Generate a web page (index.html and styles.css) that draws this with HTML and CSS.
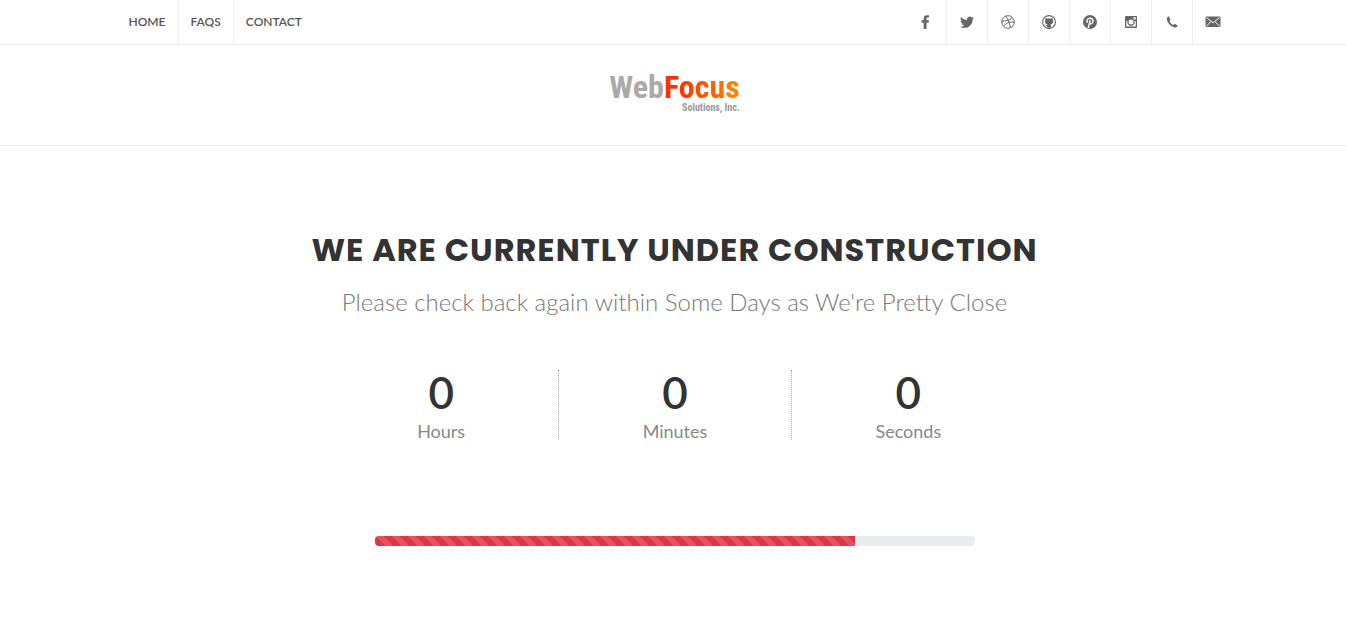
FILE: index.html
```html
<!DOCTYPE html>
<html lang="en">
<head>
<meta charset="utf-8">
<meta name="viewport" content="width=device-width, initial-scale=1">
<title>WebFocus Solutions, Inc. - Under Construction</title>
<link rel="stylesheet" href="styles.css">
</head>
<body>
<div class="top-bar">
  <div class="container top-bar-row">
    <nav class="top-links" aria-label="Main">
      <a href="#">Home</a>
      <a href="#">FAQs</a>
      <a href="#">Contact</a>
    </nav>
    <div class="top-social">
      <a href="#" aria-label="Facebook"><svg viewBox="0 0 14 14"><path d="M5.700 14V7.700H3.500V5.300h2.200V3.500C5.700 1.300 6.900.3 9 .3h2v2.300H9.700c-.9 0-1.200.4-1.200 1.200v1.500H11l-.4 2.400H8.500V14z"/></svg></a>
      <a href="#" aria-label="Twitter"><svg viewBox="0 0 14 14"><path d="M14 2.900c-.5.200-1 .4-1.600.4.600-.3 1-.9 1.200-1.500-.5.300-1.100.5-1.800.7a2.900 2.900 0 0 0-4.900 2.600C4.500 5 2.400 3.800 1 2.100c-.8 1.400-.4 3 .9 3.800-.5 0-.9-.1-1.300-.3 0 1.400 1 2.600 2.300 2.900-.4.100-.9.100-1.300 0 .4 1.100 1.400 1.900 2.700 2A5.800 5.800 0 0 1 0 11.700c4.900 3 12.600.1 12.600-7.300.5-.4 1-.9 1.400-1.500z"/></svg></a>
      <a href="#" aria-label="Dribbble"><svg viewBox="0 0 14 14" class="line"><circle cx="7" cy="7" r="6.300"/><path d="M4.700 1.200C7 4 8.500 7.500 9.400 12.800M.8 6.100c4.300 0 8-.8 10.500-3.500M2.700 11.500c2.300-4 6-5.200 10.500-4.100"/></svg></a>
      <a href="#" aria-label="GitHub"><svg viewBox="0 0 14 14"><circle cx="7" cy="7" r="6.400" fill="none" stroke="currentColor" stroke-width="1.100"/><path d="M5.100 12.800v-2.100c-1.500.3-1.900-.5-2.200-1.200 1 .1 1.100.7 2.200.6.100-.4.200-.6.400-.8C3.600 9 2.900 8 2.900 6.300c0-.7.200-1.200.6-1.700-.2-.6-.1-1.200.1-1.700.7 0 1.200.3 1.800.7 1-.3 2.200-.3 3.200 0 .6-.4 1.100-.7 1.800-.7.200.5.300 1.100.1 1.700.4.500.6 1 .6 1.700C11.100 8 10.400 9 8.500 9.300c.3.300.4.700.4 1.200v2.300z"/></svg></a>
      <a href="#" aria-label="Pinterest"><svg viewBox="0 0 14 14"><circle cx="7" cy="7" r="7"/><path d="M5.200 13 7.200 5.200M4.500 7.800C3.200 6.200 4 3.300 7.100 3.300c2.200 0 3.200 1.400 2.900 3.100-.4 2.500-2.700 3.100-3.700 1.700" fill="none" stroke="#fff" stroke-width="1.400"/></svg></a>
      <a href="#" aria-label="Instagram"><svg viewBox="0 0 14 14"><path fill-rule="evenodd" d="M2 1h10q1 0 1 1v10q0 1-1 1H2q-1 0-1-1V2q0-1 1-1zm7.500 1.300v2.200h2.200V2.300zM2.300 6v5.600h9.400V6h-1.200a3.700 3.700 0 1 1-7 0zM7 4.600a2.500 2.500 0 1 0 0 5 2.500 2.500 0 0 0 0-5z"/></svg></a>
      <a href="#" aria-label="Phone"><svg viewBox="0 0 14 14"><path d="M3.400 1.600c-1 .5-1.600 1.200-1.500 2.300.3 4 4.400 8.200 8.400 8.500 1 .1 1.800-.5 2.200-1.400.1-.3.100-.5-.2-.7L10.100 9c-.3-.2-.5-.1-.7.100l-.8.900C6.800 9.300 5.200 7.700 4.500 5.900l.7-.7c.2-.2.300-.4.200-.7L4.100 1.900c-.2-.3-.4-.4-.7-.3z"/></svg></a>
      <a href="#" aria-label="Email"><svg viewBox="0 0 14 14"><rect x="-.5" y="1.500" width="15" height="10.500" rx="1"/><path d="m.5 2.700 6.500 5 6.500-5M.5 11 4.900 6.700M13.500 11 9.100 6.700" fill="none" stroke="#fff" stroke-width="1"/></svg></a>
    </div>
  </div>
</div>
<header class="header">
  <a class="logo" href="#" aria-label="WebFocus Solutions, Inc.">
    <span class="logo-name"><span class="logo-web">Web</span><span class="logo-focus">Focus</span></span>
    <span class="logo-sub">Solutions, Inc.</span>
  </a>
</header>
<main class="content">
  <h1>We are currently under construction</h1>
  <p class="lead">Please check back again within Some Days as We're Pretty Close</p>
  <div class="countdown">
    <div class="count"><span class="amount">0</span><span class="period">Hours</span></div>
    <div class="count"><span class="amount">0</span><span class="period">Minutes</span></div>
    <div class="count"><span class="amount">0</span><span class="period">Seconds</span></div>
  </div>
  <div class="progress" role="progressbar" aria-label="Construction progress" aria-valuenow="80" aria-valuemin="0" aria-valuemax="100">
    <div class="progress-bar" style="width: 80%"></div>
  </div>
</main>
</body>
</html>
```

FILE: styles.css
```css
* { box-sizing: border-box; }
body {
  margin: 0;
  background: #fff;
  color: #555;
  font-family: Lato, "Noto Sans", sans-serif;
}
a { color: inherit; text-decoration: none; }

.top-bar, .header, .content { padding-left: 3px; }
.top-bar { border-bottom: 1px solid #eee; }
.container {
  max-width: 1140px;
  margin: 0 auto;
  padding: 0 12px;
}
.top-bar-row { display: flex; justify-content: space-between; }
.top-links, .top-social { display: flex; }
.top-links a {
  padding: 0 12px;
  font-size: 12px;
  font-weight: 600;
  line-height: 44px;
  text-transform: uppercase;
  color: #555;
}
.top-links a + a, .top-social a + a { border-left: 1px solid #eee; }
.top-social a {
  display: flex;
  align-items: center;
  justify-content: center;
  width: 41px;
  height: 44px;
  color: #666;
}
.top-social svg { width: 14px; height: 14px; fill: currentColor; overflow: visible; }
.top-social .line { fill: none; stroke: currentColor; stroke-width: 1; }

.header {
  display: flex;
  justify-content: center;
  height: 101px;
  padding-top: 26px;
  border-bottom: 1px solid #f2f2f2;
}
.logo {
  display: flex;
  flex-direction: column;
  align-items: flex-end;
  font-family: "Roboto Condensed", "Liberation Sans Narrow", "Liberation Sans", sans-serif;
  font-weight: 700;
}
.logo-name { display: flex; font-size: 32px; line-height: 32px; }
.logo-web { color: #aaa; }
.logo-focus {
  background: linear-gradient(90deg, #ff3000 20%, #ff8a00);
  background-clip: text;
  color: transparent;
}
.logo-sub { font-size: 10px; line-height: 10px; color: #999; }

.content {
  display: flex;
  flex-direction: column;
  align-items: center;
  padding-top: 80px;
  text-align: center;
}
h1 {
  margin: 0;
  font-family: Poppins, Inter, sans-serif;
  font-size: 32px;
  font-weight: 700;
  line-height: 48px;
  letter-spacing: 1px;
  text-transform: uppercase;
  color: #333;
}
.lead {
  margin: 10px 0 0;
  font-size: 24px;
  font-weight: 300;
  line-height: 36px;
  color: #777;
}
.countdown {
  display: grid;
  grid-template-columns: repeat(3, 1fr);
  width: 100%;
  max-width: 700px;
  margin-top: 50px;
}
.count { display: flex; flex-direction: column; height: 70px; }
.count + .count { border-left: 1px dotted #aaa; }
.amount { font-size: 44px; font-weight: 600; line-height: 44px; color: #333; }
.period { font-size: 18px; line-height: 34px; color: #888; }
.progress {
  width: 100%;
  max-width: 600px;
  height: 10px;
  margin-top: 96px;
  overflow: hidden;
  border-radius: 4px;
  background: #e9ecef;
}
.progress-bar {
  height: 100%;
  background: linear-gradient(45deg, rgba(255,255,255,.15) 25%, transparent 25%, transparent 50%, rgba(255,255,255,.15) 50%, rgba(255,255,255,.15) 75%, transparent 75%) 0 0 / 16px 16px #dc3545;
}
```
